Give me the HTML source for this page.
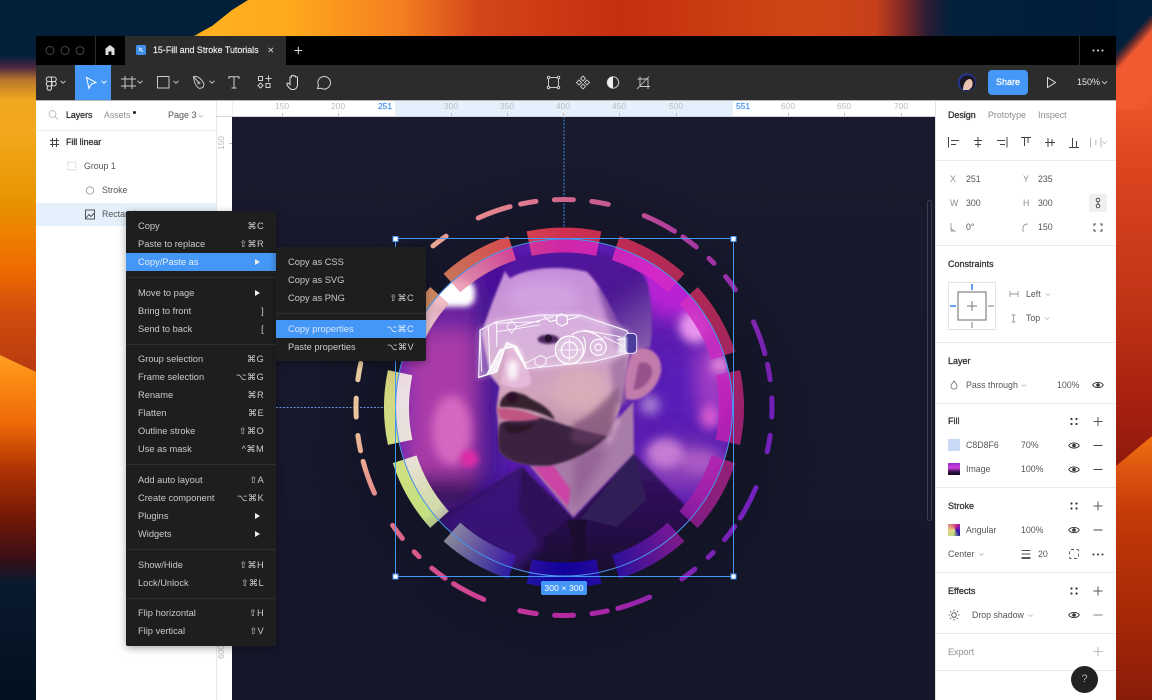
<!DOCTYPE html>
<html><head><meta charset="utf-8"><style>
html,body{margin:0;padding:0;width:1152px;height:700px;overflow:hidden;background:#03203b}
body{position:relative;font-family:"Liberation Sans","DejaVu Sans",sans-serif;font-size:9.2px;color:#333}
.a{position:absolute}
.t{position:absolute;white-space:nowrap;line-height:12px}
.b{-webkit-text-stroke:.3px #333;color:#333}
.g{color:#8d8d8d}
.k{color:#555}
.rl{position:absolute;top:101px;width:30px;text-align:center;font-size:8.4px;line-height:11px;color:#bcbcbc}
.rb{color:#4b94ea;-webkit-text-stroke:.25px #4b94ea}
.tk{position:absolute;top:113px;width:1px;height:3px;background:#bcbcbc}
.hr{position:absolute;left:936px;width:180px;height:1px;background:#ececec}
.m{position:absolute;background:#1e1e1e;color:#c9c9c9;box-shadow:0 2px 8px rgba(0,0,0,.35)}
.m .t{color:#c9c9c9;font-size:9.3px}
.m .s{position:absolute;white-space:nowrap;line-height:12px;font-size:9.3px;color:#c9c9c9;text-align:right;font-family:"DejaVu Sans","Liberation Sans",sans-serif;letter-spacing:.3px}
.m .s b{font-family:"Liberation Sans",sans-serif;font-weight:normal}
.m .l{position:absolute;left:0;right:0;height:1px;background:#2f2f2f}
.m .h{position:absolute;left:0;right:0;height:18px;background:#4597f7}
.m .ar{position:absolute;width:0;height:0;border-left:5px solid #eee;border-top:3px solid transparent;border-bottom:3px solid transparent}
</style></head><body>

<!-- wallpaper -->
<div class="a" style="left:0;top:0;width:1152px;height:36px;background:linear-gradient(90deg,#03203b 0,#03203b 180px,#ffb01f 200px,#ffa91d 290px,#f47f20 400px,#d4451a 480px,#c5300f 620px,#cf4615 800px,#c8401a 875px,#7a2626 905px,#2a1c34 928px,#04203c 950px,#021c38 1152px);"></div>
<div class="a" style="left:0;top:0;width:260px;height:37px;background:#03203b;clip-path:polygon(0 0,248px 0,232px 10px,212px 26px,192px 37px,0 37px)"></div>
<div class="a" style="left:0;top:0;width:36px;height:700px;background:linear-gradient(180deg,#03203b 0,#03203b 56px,#4a2540 67px,#b8762c 80px,#f0a820 100px,#f2a81e 130px,#e89400 200px,#f06c00 268px,#d24c0c 312px,#b83a12 372px)"></div>
<div class="a" style="left:0;top:350px;width:36px;height:350px;clip-path:polygon(0 5px,36px 22px,36px 350px,0 350px);background:linear-gradient(180deg,#ffa024 5px,#fb8a12 30px,#ee6808 74px,#b03404 119px,#7a1a06 163px,#3a0e14 208px,#0a1a2e 232px,#02101f 350px)"></div>
<div class="a" style="left:1116px;top:110px;width:36px;height:590px;background:linear-gradient(180deg,#ea5329 0,#d8431e 70px,#bf3315 200px,#a82010 290px,#8f1a0e 354px)"></div>
<div class="a" style="left:1116px;top:0;width:36px;height:110px;background:linear-gradient(132deg,#02203c 0,#02203c 35%,#6a2d2c 41%,#f15a30 48%,#f15a30 85%,#ea5329 100%)"></div>
<div class="a" style="left:1116px;top:430px;width:36px;height:270px;clip-path:polygon(0 36px,36px 6px,36px 270px,0 270px);background:linear-gradient(180deg,#f07010 6px,#dc5410 40px,#c53a08 83px,#aa2a06 173px,#8a1c0a 270px)"></div>

<!-- window base -->
<div class="a" style="left:36px;top:36px;width:1080px;height:29px;background:#000"></div>
<div class="a" style="left:125px;top:36px;width:161px;height:29px;background:#2c2c2c"></div>
<div class="a" style="left:95px;top:36px;width:1px;height:29px;background:#2c2c2c"></div>
<div class="a" style="left:1079px;top:36px;width:1px;height:29px;background:#2c2c2c"></div>
<div class="a" style="left:36px;top:65px;width:1080px;height:35px;background:#2c2c2c"></div>
<div class="a" style="left:36px;top:100px;width:1080px;height:1px;background:#b9b9b9"></div>
<div class="a" style="left:75px;top:65px;width:36px;height:35px;background:#4597f7"></div>
<div class="a" style="left:36px;top:101px;width:180px;height:599px;background:#fff"></div>
<div class="a" style="left:216px;top:101px;width:720px;height:599px;background:#fff"></div>
<div class="a" style="left:936px;top:101px;width:180px;height:599px;background:#fff"></div>

<!-- canvas -->
<svg class="a" style="left:0;top:0" width="1152" height="700" viewBox="0 0 1152 700" xmlns="http://www.w3.org/2000/svg">
<defs>
<linearGradient id="cv" x1="0" y1="0" x2="0" y2="1"><stop offset="0" stop-color="#191a2d"/><stop offset="1" stop-color="#15162a"/></linearGradient>
<radialGradient id="shg" cx="50%" cy="50%" r="50%"><stop offset="0" stop-color="#0f1021" stop-opacity=".6"/><stop offset=".72" stop-color="#0f1021" stop-opacity=".45"/><stop offset="1" stop-color="#0f1021" stop-opacity="0"/></radialGradient>
<filter id="b30" x="-50%" y="-50%" width="200%" height="200%"><feGaussianBlur stdDeviation="30"/></filter>
<filter id="b20" x="-50%" y="-50%" width="200%" height="200%"><feGaussianBlur stdDeviation="18"/></filter>
<filter id="b14" x="-60%" y="-60%" width="220%" height="220%"><feGaussianBlur stdDeviation="14"/></filter>
<filter id="b8" x="-30%" y="-30%" width="160%" height="160%"><feGaussianBlur stdDeviation="8"/></filter>
<filter id="b3" x="-20%" y="-20%" width="140%" height="140%"><feGaussianBlur stdDeviation="3"/></filter>
<clipPath id="ph"><circle cx="672" cy="652.5" r="505"/></clipPath>
<clipPath id="ph2"><circle cx="564" cy="407.5" r="168"/></clipPath>
<linearGradient id="fc" x1="0" y1="0" x2="0" y2="1"><stop offset="0" stop-color="#c48cdc"/><stop offset=".3" stop-color="#cc98d4"/><stop offset=".65" stop-color="#d2a4bc"/><stop offset="1" stop-color="#b07c98"/></linearGradient>
<linearGradient id="st" x1="0" y1="0" x2="0" y2="1"><stop offset="0" stop-color="#3a1468"/><stop offset=".45" stop-color="#2a0f50"/><stop offset="1" stop-color="#140824"/></linearGradient>
<linearGradient id="hr" x1="0" y1="0" x2="1" y2="1"><stop offset="0" stop-color="#5210a4"/><stop offset=".6" stop-color="#4e1a94"/><stop offset="1" stop-color="#8a62b0"/></linearGradient>
<mask id="mo" maskUnits="userSpaceOnUse" x="0" y="0" width="1152" height="700"><circle cx="564" cy="407.5" r="208" fill="none" stroke="#fff" stroke-width="5" stroke-linecap="round" pathLength="360" transform="rotate(-92.6 564 407.5)" stroke-dasharray="5.2 5.1 4.6 10.4 9.4 2.8 4.6 4.7 1.9 4.9 4.5 10.2 9.3 3 4.3 5.1 5.2 5.1 4.6 10.4 9.4 2.8 4.6 4.7 1.9 4.9 4.5 10.2 9.3 3 4.3 5.1 5.2 5.1 4.6 10.4 9.4 2.8 4.6 4.7 1.9 4.9 4.5 10.2 9.3 3 4.3 5.1 5.2 5.1 4.6 10.4 9.4 2.8 4.6 4.7 1.9 4.9 4.5 10.2 9.3 3 4.3 5.1"/></mask>
<mask id="mr" maskUnits="userSpaceOnUse" x="0" y="0" width="1152" height="700"><circle cx="564" cy="407.5" r="167.5" fill="none" stroke="#fff" stroke-width="25" pathLength="360" transform="rotate(-102 564 407.5)" stroke-dasharray="24 6"/></mask>
</defs>
<rect x="232" y="116" width="704" height="584" fill="url(#cv)"/>
<circle cx="564" cy="425" r="265" fill="url(#shg)"/>
<line x1="564" y1="116" x2="564" y2="239" stroke="#3f8fe8" stroke-width="1" stroke-dasharray="2 1.5"/>
<line x1="276" y1="407.5" x2="395" y2="407.5" stroke="#5f95d8" stroke-width="1" stroke-dasharray="2 1.5"/>
<rect x="927.5" y="200.5" width="4" height="320" rx="2" fill="none" stroke="#3b3c4c"/>

<!-- outer dashes -->
<foreignObject x="340" y="180" width="450" height="450" mask="url(#mo)"><div xmlns="http://www.w3.org/1999/xhtml" style="width:450px;height:450px;background:conic-gradient(from 0deg at 224px 227.5px,#cf648c 0deg,#c55c90 12deg,#b4409a 30deg,#9e30a8 48deg,#8a2aac 60deg,#7a22b0 72deg,#7420b6 90deg,#7022be 112deg,#7a22b6 135deg,#8a22b0 150deg,#a526a8 168deg,#b82aa0 182deg,#c63a98 195deg,#d24a90 212deg,#d85a88 228deg,#e47c8c 240deg,#eaa090 252deg,#e8c49c 268deg,#e6cca2 285deg,#eab09a 318deg,#e88c90 332deg,#e07c8e 348deg,#cf648c 360deg)"></div></foreignObject>

<!-- thick ring under -->
<foreignObject x="340" y="180" width="450" height="450" mask="url(#mr)"><div xmlns="http://www.w3.org/1999/xhtml" style="width:450px;height:450px;background:conic-gradient(from 0deg at 224px 227.5px,#cf3050 0deg,#b62a55 30deg,#a82858 60deg,#9c1f6c 90deg,#8c1f7c 120deg,#7a1a8c 140deg,#300f9c 162deg,#0f06a5 180deg,#2a1aa0 198deg,#8a8898 222deg,#c4e080 232deg,#d0e080 250deg,#d2d880 275deg,#d0a068 300deg,#c97058 320deg,#d84a50 342deg,#cf3050 360deg)"></div></foreignObject>

<!-- photo -->
<g clip-path="url(#ph2)"><g transform="translate(340 190) scale(.33333)" clip-path="url(#ph)">
<rect x="150" y="130" width="1050" height="1050" fill="#5a1cb0"/>
<g filter="url(#b30)">
<rect x="150" y="130" width="330" height="300" fill="#6a20a0"/>
<rect x="190" y="420" width="220" height="440" fill="#a83aa8"/>
<rect x="410" y="240" width="70" height="700" fill="#3c1490"/>
<circle cx="470" cy="250" r="70" fill="#4a0f98"/>
<ellipse cx="1010" cy="280" rx="130" ry="110" fill="#b820d4"/>
<ellipse cx="1120" cy="560" rx="50" ry="120" fill="#a840c8"/>
<ellipse cx="1010" cy="600" rx="70" ry="110" fill="#581cb8"/>
<ellipse cx="1040" cy="830" rx="130" ry="70" fill="#8a40b8"/>
<rect x="190" y="860" width="230" height="110" fill="#3a1660"/>
</g>
<g filter="url(#b14)">
<ellipse cx="335" cy="720" rx="60" ry="105" fill="#d468c0"/>
<ellipse cx="1065" cy="410" rx="48" ry="50" fill="#e894ec"/>
<ellipse cx="1140" cy="525" rx="28" ry="26" fill="#e088d8"/>
<ellipse cx="1110" cy="680" rx="30" ry="38" fill="#d058d0"/>
<circle cx="930" cy="645" r="30" fill="#a078d0"/>
<ellipse cx="975" cy="790" rx="55" ry="45" fill="#c47cd4"/>
<ellipse cx="1075" cy="815" rx="55" ry="35" fill="#a858c4"/>
</g>
<g filter="url(#b8)">
<rect x="275" y="272" width="130" height="78" rx="30" fill="#fff"/>
<circle cx="388" cy="806" r="26" fill="#dc2ca4"/>
</g>
<!-- suit -->
<path d="M240 1010 L400 920 L545 830 L700 985 L880 790 L1040 950 L1200 1200 L150 1200Z" fill="url(#st)" filter="url(#b3)"/>
<path d="M300 985 L545 830 L540 960 L610 1060 L520 1160 L350 1100Z" fill="#3e1484" opacity=".75" filter="url(#b14)"/>
<path d="M545 832 L690 985 L600 1050 L542 950Z" fill="#2e1058"/>
<path d="M882 790 L722 985 L830 1010 L920 930Z" fill="#321e56"/>
<path d="M682 990 L740 990 L735 1060 L760 1180 L670 1180 L700 1060Z" fill="#1c0c30"/>
<!-- neck -->
<path d="M568 825 L700 982 L882 790 L880 635 L780 745 L640 820Z" fill="#a87ca8" filter="url(#b3)"/>
<path d="M578 830 L640 826 L692 900 L684 950Z" fill="#cc44a4" filter="url(#b3)"/>
<path d="M815 650 L838 690 L810 760 L795 750Z" fill="#f0c4e0" opacity=".7" filter="url(#b8)"/>
<path d="M700 800 L780 760 L800 790 L700 960Z" fill="#8e5a90" opacity=".7" filter="url(#b14)"/>
<!-- face -->
<path d="M500 232 C470 300 440 380 425 430 L450 555 L478 590 L470 650 L480 782 C500 815 560 828 640 822 C725 800 800 762 842 650 L870 480 L905 300 L830 215 L600 205Z" fill="url(#fc)" filter="url(#b3)"/>
<ellipse cx="720" cy="600" rx="80" ry="70" fill="#dcb0b8" opacity=".75" filter="url(#b20)"/>
<ellipse cx="610" cy="320" rx="110" ry="50" fill="#d4a4e4" opacity=".8" filter="url(#b20)"/>
<path d="M770 290 L880 290 L880 480 L830 470Z" fill="#7e4aa4" filter="url(#b8)" opacity=".85"/>
<path d="M810 520 L865 480 L860 640 L825 650Z" fill="#9a6c9c" opacity=".7" filter="url(#b8)"/>
<!-- hair -->
<path d="M490 238 C500 195 600 175 720 180 C830 185 908 220 925 290 C940 380 936 440 930 472 L880 480 C870 440 845 410 830 390 C800 320 770 275 740 245 C660 225 560 232 510 265Z" fill="url(#hr)" filter="url(#b3)"/>
<!-- ear -->
<path d="M880 480 C930 458 972 500 962 550 C950 600 900 642 858 626 C848 580 860 520 880 480Z" fill="#c27cac" filter="url(#b3)"/>
<path d="M896 520 C925 510 940 530 935 555 C920 590 895 600 880 600Z" fill="#84407f" opacity=".7" filter="url(#b3)"/>
<!-- beard -->
<path d="M480 700 C500 690 560 680 600 682 C640 690 680 712 800 738 C770 775 700 815 625 827 C560 830 495 815 478 782 C472 750 474 720 480 700Z" fill="#3a2040" filter="url(#b3)"/>
<path d="M700 700 C760 680 800 620 838 590 L815 735 C770 770 720 770 690 750Z" fill="#6c4068" opacity=".6" filter="url(#b8)"/>
<path d="M480 640 C490 600 540 600 570 625 C600 640 632 655 645 690 C600 665 540 648 480 652Z" fill="#36202e" filter="url(#b3)"/>
<path d="M470 656 C520 652 570 665 602 686 C560 696 510 696 480 686Z" fill="#c05484" filter="url(#b3)"/>
<path d="M498 702 C530 708 560 708 582 700 C565 732 515 735 498 722Z" fill="#2a1428" filter="url(#b3)"/>
<!-- nose -->
<path d="M505 470 L545 480 L575 575 C565 600 520 600 480 580Z" fill="#e4b8d8" filter="url(#b3)"/>
<ellipse cx="518" cy="540" rx="16" ry="32" fill="#fff" opacity=".85" filter="url(#b8)"/>
<ellipse cx="517" cy="622" rx="17" ry="16" fill="#2e0e28" filter="url(#b3)"/>
<!-- eye & glasses -->
<path d="M416 562 L420 420 L470 395 L600 375 L720 375 L860 422 L888 470 L860 490 L760 515 L560 536 L530 470 L500 458 L470 545Z" fill="#f4ecff" fill-opacity=".28"/>
<path d="M416 562 L420 420 L470 395 L600 375 L720 375 L860 422 L888 470 L860 490 L760 515 L560 536 L530 470 L500 458 L470 545Z" fill="none" stroke="#fff" stroke-width="10" opacity=".35" filter="url(#b8)"/>
<ellipse cx="625" cy="448" rx="32" ry="14" fill="#4a2560" filter="url(#b3)"/>
<circle cx="625" cy="445" r="11" fill="#26102e"/>
<path d="M416 562 L420 420 L470 395 L600 375 L720 375 L860 422 L888 470 L860 490 L760 515 L560 536 L530 470 L500 458 L470 545Z" fill="none" stroke="#f8f2ff" stroke-width="3.5"/>
<path d="M416 562 L470 545 L500 458 L530 470 L560 536 L520 470 L480 480 L440 555Z" fill="#fff" fill-opacity=".75" stroke="#fff" stroke-width="4"/>
<path d="M420 420 L425 545 M445 410 L450 540 M470 395 L470 470" stroke="#fff" stroke-width="3.5" opacity=".85"/>
<path d="M500 410 L515 392 L530 410 L515 430Z M460 400 L600 395 M470 425 L600 405 M530 410 L640 380" fill="none" stroke="#fff" stroke-width="2.5"/>
<path d="M650 380 L665 372 L682 380 L682 400 L665 408 L650 400Z M612 378 L630 395 L650 390 M682 390 L720 378" fill="none" stroke="#fff" stroke-width="3.5"/>
<path d="M585 505 L602 496 L618 505 L618 522 L602 530 L585 522Z M555 520 L585 505 M618 505 L650 495" fill="none" stroke="#fff" stroke-width="2.5"/>
<circle cx="688" cy="480" r="42" fill="#fff" fill-opacity=".22" stroke="#fff" stroke-width="4"/>
<circle cx="688" cy="480" r="24" fill="none" stroke="#fff" stroke-width="3.5"/>
<path d="M688 445 V515 M653 480 H723" stroke="#fff" stroke-width="2.5"/>
<path d="M695 435 C730 410 770 430 790 450 M730 440 C745 470 730 500 720 505" fill="none" stroke="#fff" stroke-width="3.5"/>
<circle cx="775" cy="472" r="24" fill="#fff" fill-opacity=".15" stroke="#fff" stroke-width="3.5"/>
<circle cx="775" cy="472" r="10" fill="none" stroke="#fff" stroke-width="3.5"/>
<path d="M730 420 L840 440 M790 440 L855 470 M830 450 L880 440" stroke="#fff" stroke-width="3" opacity=".9"/>
<rect x="855" y="430" width="35" height="60" rx="12" fill="#4a3c9c" stroke="#e8e0ff" stroke-width="3"/>
<rect x="835" y="440" width="26" height="50" fill="#fff" opacity=".7" filter="url(#b3)"/>
</g></g>

<!-- ring over image -->
<g clip-path="url(#ph2)"><foreignObject x="340" y="180" width="450" height="450" mask="url(#mr)" opacity=".9"><div xmlns="http://www.w3.org/1999/xhtml" style="width:450px;height:450px;background:conic-gradient(from 0deg at 224px 227.5px,#dc28a8 0deg,#d828c8 30deg,#cc30c4 60deg,#c022b8 90deg,#a822a8 120deg,#7a1aa0 140deg,#3010a4 162deg,#1000a8 180deg,#3a18a8 198deg,#9090a8 222deg,#e4f0b0 232deg,#f0f4d8 250deg,#f8f4ec 275deg,#f4d8d0 300deg,#e888a8 325deg,#e04090 345deg,#dc28a8 360deg)"></div></foreignObject></g>

<!-- selection -->
<circle cx="564" cy="407.5" r="168.5" fill="none" stroke="#4a97ee" stroke-width="1"/>
<rect x="395.5" y="238.5" width="338" height="338" fill="none" stroke="#4597f7" stroke-width="1"/>
<g fill="#fff" stroke="#4597f7"><rect x="393" y="236.5" width="5" height="5"/><rect x="731" y="236.5" width="5" height="5"/><rect x="393" y="574" width="5" height="5"/><rect x="731" y="574" width="5" height="5"/></g>
<rect x="541" y="581" width="46" height="14" rx="2" fill="#4597f7"/>
</svg>
<div class="t" style="left:541px;top:582px;width:46px;text-align:center;color:#fff;font-size:8.6px;letter-spacing:.1px">300 × 300</div>

<!-- left panel + rulers decoration -->
<div class="a" style="left:36px;top:130px;width:180px;height:1px;background:#eee"></div>
<div class="a" style="left:36px;top:203px;width:180px;height:23px;background:#e4f1fc"></div>
<div class="a" style="left:216px;top:101px;width:1px;height:599px;background:#e8e8e8"></div>
<div class="a" style="left:232px;top:101px;width:1px;height:15px;background:#eee"></div>
<div class="a" style="left:395px;top:101px;width:338px;height:15px;background:#e4f1fc"></div>
<div class="a" style="left:216px;top:116px;width:720px;height:1px;background:#d5d6dc"></div>
<div class="rl" style="left:267px">150</div><div class="rl" style="left:323px">200</div><div class="rl rb" style="left:370px">251</div>
<div class="rl" style="left:436px">300</div><div class="rl" style="left:492px">350</div><div class="rl" style="left:548px">400</div><div class="rl" style="left:604px">450</div><div class="rl" style="left:661px">500</div>
<div class="rl rb" style="left:728px">551</div><div class="rl" style="left:773px">600</div><div class="rl" style="left:829px">650</div><div class="rl" style="left:886px">700</div>
<div class="tk" style="left:282px"></div><div class="tk" style="left:338px"></div><div class="tk" style="left:451px"></div><div class="tk" style="left:507px"></div><div class="tk" style="left:563px"></div><div class="tk" style="left:619px"></div><div class="tk" style="left:676px"></div><div class="tk" style="left:788px"></div><div class="tk" style="left:844px"></div><div class="tk" style="left:901px"></div>
<div class="a" style="left:229px;top:143px;width:3px;height:1px;background:#bcbcbc"></div>
<div class="t" style="left:212px;top:137px;width:20px;text-align:center;font-size:8.2px;color:#bcbcbc;transform:rotate(-90deg)">150</div>
<div class="t" style="left:212px;top:646px;width:20px;text-align:center;font-size:8.2px;color:#bcbcbc;transform:rotate(-90deg)">600</div>

<div class="t b" style="left:66px;top:109px;font-size:8.8px">Layers</div>
<div class="t g" style="left:104px;top:109px;font-size:8.8px">Assets</div>
<div class="a" style="left:132.5px;top:110.5px;width:3px;height:3px;border-radius:50%;background:#222"></div>
<div class="t k" style="left:168px;top:109px;font-size:9px">Page 3</div>
<div class="t b" style="left:66px;top:136px;font-size:8.8px">Fill linear</div>
<div class="t k" style="left:84px;top:160px;font-size:8.8px">Group 1</div>
<div class="t k" style="left:102px;top:184px;font-size:8.8px">Stroke</div>
<div class="t k" style="left:102px;top:208px;font-size:8.8px">Rectangle</div>

<!-- title text -->
<div class="t" style="left:153px;top:44px;color:#f0f0f0;font-size:8.9px;-webkit-text-stroke:.15px #f0f0f0">15-Fill and Stroke Tutorials</div>
<div class="a" style="left:988px;top:70px;width:40px;height:25px;border-radius:4px;background:#4597f7"></div>
<div class="t" style="left:988px;top:76px;width:40px;text-align:center;color:#fff;font-size:9px;-webkit-text-stroke:.25px #fff">Share</div>
<div class="t" style="left:1077px;top:76px;color:#e8e8e8;font-size:9px">150%</div>

<!-- right panel -->
<div class="a" style="left:935px;top:101px;width:1px;height:599px;background:#e2e2e2"></div>
<div class="hr" style="top:160px"></div><div class="hr" style="top:245px"></div><div class="hr" style="top:342px"></div><div class="hr" style="top:403px"></div><div class="hr" style="top:487px"></div><div class="hr" style="top:572px"></div><div class="hr" style="top:633px"></div><div class="hr" style="top:670px"></div>
<div class="t b" style="left:948px;top:109px;font-size:8.9px">Design</div>
<div class="t g" style="left:988px;top:109px;font-size:8.9px">Prototype</div>
<div class="t g" style="left:1038px;top:109px;font-size:8.9px">Inspect</div>
<div class="t g" style="left:950px;top:173px;font-size:8.8px">X</div><div class="t k" style="left:966px;top:173px;font-size:8.8px">251</div>
<div class="t g" style="left:1023px;top:173px;font-size:8.8px">Y</div><div class="t k" style="left:1038px;top:173px;font-size:8.8px">235</div>
<div class="t g" style="left:950px;top:197px;font-size:8.8px">W</div><div class="t k" style="left:966px;top:197px;font-size:8.8px">300</div>
<div class="t g" style="left:1023px;top:197px;font-size:8.8px">H</div><div class="t k" style="left:1038px;top:197px;font-size:8.8px">300</div>
<div class="t k" style="left:966px;top:221px;font-size:8.8px">0°</div><div class="t k" style="left:1038px;top:221px;font-size:8.8px">150</div>
<div class="t b" style="left:948px;top:258px;font-size:9px">Constraints</div>
<div class="t k" style="left:1026px;top:288px;font-size:8.8px">Left</div>
<div class="t k" style="left:1026px;top:312px;font-size:8.8px">Top</div>
<div class="t b" style="left:948px;top:355px;font-size:9px">Layer</div>
<div class="t k" style="left:966px;top:379px;font-size:8.8px">Pass through</div>
<div class="t k" style="left:1057px;top:379px;font-size:8.8px">100%</div>
<div class="t b" style="left:948px;top:415px;font-size:9px">Fill</div>
<div class="t k" style="left:966px;top:439px;font-size:8.8px">C8D8F6</div><div class="t k" style="left:1021px;top:439px;font-size:8.8px">70%</div>
<div class="t k" style="left:966px;top:463px;font-size:8.8px">Image</div><div class="t k" style="left:1021px;top:463px;font-size:8.8px">100%</div>
<div class="t b" style="left:948px;top:500px;font-size:9px">Stroke</div>
<div class="t k" style="left:966px;top:524px;font-size:8.8px">Angular</div><div class="t k" style="left:1021px;top:524px;font-size:8.8px">100%</div>
<div class="t k" style="left:948px;top:548px;font-size:8.8px">Center</div><div class="t k" style="left:1038px;top:548px;font-size:8.8px">20</div>
<div class="t b" style="left:948px;top:585px;font-size:9px">Effects</div>
<div class="t k" style="left:972px;top:609px;font-size:8.8px">Drop shadow</div>
<div class="t" style="left:948px;top:646px;font-size:9px;color:#a5a5a5;-webkit-text-stroke:.2px #a5a5a5">Export</div>
<div class="a" style="left:948px;top:439px;width:12px;height:12px;background:#c8d8f6"></div>
<div class="a" style="left:948px;top:463px;width:12px;height:12px;background:linear-gradient(180deg,#9a2ad0,#d040e0 40%,#2a1040 75%,#140820)"></div>
<div class="a" style="left:948px;top:524px;width:12px;height:12px;background:conic-gradient(from 200deg at 60% 45%,#c0e080,#e8d080,#e07a80,#c02090,#6a1ab8,#2a1aa0,#c0e080)"></div>
<div class="a" style="left:1089px;top:194px;width:18px;height:18px;background:#f0f0f0;border-radius:2px"></div>
<div class="a" style="left:1071px;top:666px;width:27px;height:27px;border-radius:50%;background:#222"></div>
<div class="t" style="left:1071px;top:673px;width:27px;text-align:center;color:#a8a8a8;font-size:11px">?</div>

<!-- UI icons -->
<svg class="a" style="left:0;top:0" width="1152" height="700" viewBox="0 0 1152 700" xmlns="http://www.w3.org/2000/svg" fill="none">
<defs>
<g id="eye"><path d="M-5.3 0C-3.3-3.4 3.3-3.4 5.3 0C3.3 3.4-3.3 3.4-5.3 0Z" stroke="#333" stroke-width=".9"/><circle r="1.8" fill="#333"/></g>
<g id="dots" fill="#333"><circle cx="-2.5" cy="-2.5" r="1.1"/><circle cx="2.5" cy="-2.5" r="1.1"/><circle cx="-2.5" cy="2.5" r="1.1"/><circle cx="2.5" cy="2.5" r="1.1"/></g>
<path id="plus" d="M-4.5 0H4.5M0-4.5V4.5" stroke="#555" stroke-width="1"/>
<path id="minus" d="M-4.5 0H4.5" stroke="#444" stroke-width="1"/>
<path id="chv" d="M-2.5-1.2L0 1.2L2.5-1.2" stroke="#c8c8c8" stroke-width="1"/>
<path id="chl" d="M-2.2-1L0 1L2.2-1" stroke="#b5b5b5" stroke-width=".8"/>
</defs>
<!-- title bar -->
<g stroke="#4a4a4a" stroke-width="1"><circle cx="50" cy="50.5" r="4"/><circle cx="65" cy="50.5" r="4"/><circle cx="80" cy="50.5" r="4"/></g>
<path d="M105.5 55V48.5L110 45L114.5 48.5V55H111.5V51.5H108.5V55Z" fill="#ddd"/>
<rect x="136" y="45" width="10" height="10" rx="1.5" fill="#3f8fe8"/><path d="M138.5 47.5L143 52M139 51L142 48" stroke="#cfe2fb" stroke-width="1.2"/>
<path d="M268.5 47.8L273 52.2M273 47.8L268.5 52.2" stroke="#c8c8c8" stroke-width="1"/>
<path d="M294.5 50.5H302M298.3 46.8V54.2" stroke="#e0e0e0" stroke-width="1"/>
<g fill="#ddd"><circle cx="1093.5" cy="50.5" r="1"/><circle cx="1098" cy="50.5" r="1"/><circle cx="1102.5" cy="50.5" r="1"/></g>
<!-- toolbar -->
<g stroke="#dcdcdc" stroke-width="1"><path d="M48.5 77H51.5V81.5H48.5A2.2 2.2 0 0 1 48.5 77ZM51.5 77H54A2.2 2.2 0 0 1 54 81.5H51.5ZM48.5 81.5H51.5V86H48.5A2.2 2.2 0 0 1 48.5 81.5ZM48.5 86H51.5V88A2.2 2.2 0 1 1 48.5 86Z"/><circle cx="54" cy="83.7" r="2.2"/></g>
<use href="#chv" x="63" y="82"/>
<path d="M86.5 77.5L96 82.5L91.5 84L89 88.5Z" stroke="#fff" stroke-width="1"/>
<use href="#chv" x="104" y="82" style="filter:brightness(1.3)"/>
<path d="M125 76V89M132 76V89M121 79H136M121 86H136" stroke="#c8c8c8" stroke-width="1"/>
<use href="#chv" x="140" y="82"/>
<rect x="157.5" y="76.5" width="11.5" height="11.5" stroke="#c8c8c8" stroke-width="1"/>
<use href="#chv" x="176" y="82"/>
<path d="M193.5 76.5C197 76 201 78 204 84L203 87.5L199.5 88.5C196 86.5 194 82 193.5 76.5ZM193.5 76.5L199 83" stroke="#c8c8c8" stroke-width="1"/><circle cx="199" cy="83" r="1" stroke="#c8c8c8" stroke-width=".8"/>
<use href="#chv" x="212" y="82"/>
<path d="M229 79V76.7H239V79M234 76.7V88M231.5 88H236.5" stroke="#d0d0d0" stroke-width="1"/>
<g stroke="#d0d0d0" stroke-width="1"><rect x="258.5" y="76.5" width="4" height="4"/><path d="M268.5 75.5V81.5M265.5 78.5H271.5"/><path d="M260.5 83L263 85.5L260.5 88L258 85.5Z"/><rect x="266" y="83.5" width="4" height="4"/></g>
<path d="M290 88.5C288 87 286.5 84.5 287 83.5C287.5 82.5 289 83 290 84.5V77.5C290 76.5 291.5 76.5 291.5 77.5V76C291.5 75 293.5 75 293.5 76V76.5C293.5 75.5 295.5 75.5 295.5 76.5V77.5C295.5 76.5 297.5 76.5 297.5 77.5V84C297.5 87 296 89 294 89.5H292C291 89.5 290.5 89 290 88.5Z" stroke="#e0e0e0" stroke-width="1"/>
<path d="M317.5 88.5L318.5 85.5A6.3 6.3 0 1 1 321 88.2Z" stroke="#d0d0d0" stroke-width="1"/>
<g stroke="#c8c8c8" stroke-width="1"><rect x="548.5" y="77.5" width="10" height="10"/><circle cx="548.5" cy="77.5" r="1.2" fill="#2c2c2c"/><circle cx="558.5" cy="77.5" r="1.2" fill="#2c2c2c"/><circle cx="548.5" cy="87.5" r="1.2" fill="#2c2c2c"/><circle cx="558.5" cy="87.5" r="1.2" fill="#2c2c2c"/><path d="M583 76L585.5 78.5L583 81L580.5 78.5ZM583 84L585.5 86.5L583 89L580.5 86.5ZM579 80L581.5 82.5L579 85L576.5 82.5ZM587 80L589.5 82.5L587 85L584.5 82.5Z" stroke-width=".9"/><circle cx="613" cy="82.5" r="5.7"/></g>
<path d="M613 76.8A5.7 5.7 0 0 0 613 88.2Z" fill="#eee"/>
<path d="M637.5 79H648V89M640 76.5V86.5H650M637 89L649 76.5" stroke="#c8c8c8" stroke-width=".9"/>
<circle cx="967" cy="82.5" r="9" fill="#2438a0"/><circle cx="967.5" cy="83" r="7.8" fill="#1a1520"/><path d="M963 90C963 84 966 79 970 79C973 80 973 84 972 87L969 90Z" fill="#e8c4b0"/>
<path d="M1047.5 77.5L1055.5 82.5L1047.5 87.5Z" stroke="#ddd" stroke-width="1"/>
<use href="#chv" x="1104.5" y="82.5"/>
<!-- layers -->
<circle cx="52.5" cy="114" r="3.4" stroke="#bbb" stroke-width=".9"/><path d="M55 116.5L58 119.5" stroke="#bbb" stroke-width=".9"/>
<use href="#chl" x="201" y="116"/>
<path d="M52.5 138V147M56.5 138V147M50 140.5H59M50 144.5H59" stroke="#444" stroke-width="1"/>
<rect x="68" y="162" width="8" height="8" stroke="#c0c0c0" stroke-width=".9" stroke-dasharray="1.5 1.5"/>
<circle cx="90" cy="190.5" r="3.7" stroke="#999" stroke-width=".9"/>
<rect x="85.5" y="210" width="9" height="9" stroke="#444" stroke-width=".9"/><path d="M86 218L89 214.5L91 216.5L94.5 213" stroke="#444" stroke-width=".9"/>
<!-- align -->
<g stroke="#444" stroke-width="1"><path d="M948.5 137V147.5M951 140.5H959M951 144.5H956"/><path d="M978 137V147.5M974 140.5H982M975 144.5H981"/><path d="M1007 137V147.5M997 140.5H1005M1000 144.5H1005"/><path d="M1021 137.5H1031M1024.5 138V146M1028 138V143"/><path d="M1045 142.5H1055M1048 138V147M1052 139V146"/><path d="M1069 147.5H1079M1072.5 138V147M1076.5 141V147"/></g>
<path d="M1090.5 137.5V147.5M1101 137.5V147.5M1095.8 140V145" stroke="#bbb" stroke-width="1"/><use href="#chl" x="1104.5" y="142.5"/>
<!-- xywh -->
<path d="M951 223V231H956M951 228.5L954 231" stroke="#999" stroke-width=".9"/>
<path d="M1023 232V228.5C1023 225.5 1025 224 1028 224" stroke="#999" stroke-width=".9"/>
<circle cx="1098" cy="200" r="1.8" stroke="#444" stroke-width=".9"/><circle cx="1098" cy="206" r="1.8" stroke="#444" stroke-width=".9"/><path d="M1098 201.5V204.5" stroke="#444"/>
<path d="M1094 226V224H1096M1100 224H1102V226M1102 229V231H1100M1096 231H1094V229" stroke="#444" stroke-width="1"/>
<!-- constraints -->
<rect x="948.5" y="282.5" width="47" height="47" stroke="#e3e3e3"/>
<rect x="958" y="292" width="28" height="28" stroke="#6a6a6a" stroke-width="1"/>
<path d="M967 306H977M972 301V311" stroke="#777" stroke-width="1"/>
<path d="M972 284V290M950 306H956" stroke="#2f80ed" stroke-width="1.5"/>
<path d="M988 306H994M972 322V328" stroke="#aaa" stroke-width="1.5"/>
<path d="M1010 291V297M1018 291V297M1010 294H1018" stroke="#999" stroke-width=".9"/><use href="#chl" x="1048" y="294.5"/>
<path d="M1011.5 315H1015.5M1011.5 322H1015.5M1013.5 315V322" stroke="#999" stroke-width=".9"/><use href="#chl" x="1047" y="318.5"/>
<!-- layer -->
<path d="M954 381L956.5 384.5A3 3 0 1 1 951.5 384.5Z" stroke="#777" stroke-width=".9"/><use href="#chl" x="1024" y="385.5"/><use href="#eye" x="1098" y="385"/>
<!-- fill -->
<use href="#dots" x="1074" y="421.5"/><use href="#plus" x="1098" y="421.5"/>
<use href="#eye" x="1074" y="445.5"/><use href="#minus" x="1098" y="445.5"/>
<use href="#eye" x="1074" y="469.5"/><use href="#minus" x="1098" y="469.5"/>
<!-- stroke -->
<use href="#dots" x="1074" y="506"/><use href="#plus" x="1098" y="506"/>
<use href="#eye" x="1074" y="530"/><use href="#minus" x="1098" y="530"/>
<use href="#chl" x="981.5" y="554.5"/>
<path d="M1021.5 550.5H1030.5M1021.5 554H1030.5" stroke="#555" stroke-width="1"/><path d="M1021.5 558H1030.5" stroke="#555" stroke-width="2"/>
<rect x="1069.5" y="549.5" width="9" height="9" rx="1.5" stroke="#555" stroke-dasharray="3 2.5" stroke-width=".9"/>
<g fill="#333"><circle cx="1093.5" cy="554.5" r="1"/><circle cx="1098" cy="554.5" r="1"/><circle cx="1102.5" cy="554.5" r="1"/></g>
<!-- effects -->
<use href="#dots" x="1074" y="591"/><use href="#plus" x="1098" y="591"/>
<circle cx="954" cy="615" r="2.3" stroke="#444" stroke-width=".9"/><path d="M954 609.5V611M954 619V620.5M948.5 615H950M958 615H959.5M950.1 611.1L951.2 612.2M956.8 617.8L957.9 618.9M950.1 618.9L951.2 617.8M956.8 612.2L957.9 611.1" stroke="#444" stroke-width=".8"/>
<use href="#chl" x="1030.5" y="615.5"/><use href="#eye" x="1074" y="615"/><path d="M1093.5 615H1102.5" stroke="#999" stroke-width="1.2"/>
<path d="M1093.5 651.5H1102.5M1098 647V656" stroke="#bbb" stroke-width="1"/>
</svg>

<!-- context menu -->
<div class="m" style="left:126px;top:211px;width:150px;height:435px;border-radius:2px">
<div class="h" style="top:42px"></div>
<div class="l" style="top:66px"></div><div class="l" style="top:133px"></div><div class="l" style="top:253px"></div><div class="l" style="top:338px"></div><div class="l" style="top:387px"></div>
<div class="t" style="left:12px;top:9px">Copy</div><div class="s" style="right:12px;top:9px">⌘<b>C</b></div>
<div class="t" style="left:12px;top:27px">Paste to replace</div><div class="s" style="right:12px;top:27px">⇧⌘<b>R</b></div>
<div class="t" style="left:12px;top:45px;color:#e4eefc">Copy/Paste as</div><div class="ar" style="left:129px;top:48px"></div>
<div class="t" style="left:12px;top:76px">Move to page</div><div class="ar" style="left:129px;top:79px"></div>
<div class="t" style="left:12px;top:94px">Bring to front</div><div class="s" style="right:12px;top:94px"><b>]</b></div>
<div class="t" style="left:12px;top:112px">Send to back</div><div class="s" style="right:12px;top:112px"><b>[</b></div>
<div class="t" style="left:12px;top:142px">Group selection</div><div class="s" style="right:12px;top:142px">⌘<b>G</b></div>
<div class="t" style="left:12px;top:160px">Frame selection</div><div class="s" style="right:12px;top:160px">⌥⌘<b>G</b></div>
<div class="t" style="left:12px;top:178px">Rename</div><div class="s" style="right:12px;top:178px">⌘<b>R</b></div>
<div class="t" style="left:12px;top:196px">Flatten</div><div class="s" style="right:12px;top:196px">⌘<b>E</b></div>
<div class="t" style="left:12px;top:214px">Outline stroke</div><div class="s" style="right:12px;top:214px">⇧⌘<b>O</b></div>
<div class="t" style="left:12px;top:232px">Use as mask</div><div class="s" style="right:12px;top:232px"><b>^</b>⌘<b>M</b></div>
<div class="t" style="left:12px;top:263px">Add auto layout</div><div class="s" style="right:12px;top:263px">⇧<b>A</b></div>
<div class="t" style="left:12px;top:281px">Create component</div><div class="s" style="right:12px;top:281px">⌥⌘<b>K</b></div>
<div class="t" style="left:12px;top:299px">Plugins</div><div class="ar" style="left:129px;top:302px"></div>
<div class="t" style="left:12px;top:317px">Widgets</div><div class="ar" style="left:129px;top:320px"></div>
<div class="t" style="left:12px;top:348px">Show/Hide</div><div class="s" style="right:12px;top:348px">⇧⌘<b>H</b></div>
<div class="t" style="left:12px;top:366px">Lock/Unlock</div><div class="s" style="right:12px;top:366px">⇧⌘<b>L</b></div>
<div class="t" style="left:12px;top:396px">Flip horizontal</div><div class="s" style="right:12px;top:396px">⇧<b>H</b></div>
<div class="t" style="left:12px;top:414px">Flip vertical</div><div class="s" style="right:12px;top:414px">⇧<b>V</b></div>
</div>
<!-- submenu -->
<div class="m" style="left:276px;top:247px;width:150px;height:114px;border-radius:0 2px 2px 0">
<div class="h" style="top:73px"></div>
<div class="l" style="top:66px"></div>
<div class="t" style="left:12px;top:9px">Copy as CSS</div>
<div class="t" style="left:12px;top:27px">Copy as SVG</div>
<div class="t" style="left:12px;top:45px">Copy as PNG</div><div class="s" style="right:12px;top:45px">⇧⌘<b>C</b></div>
<div class="t" style="left:12px;top:76px;color:#d5e6fb">Copy properties</div><div class="s" style="right:12px;top:76px;color:#e4eefc">⌥⌘<b>C</b></div>
<div class="t" style="left:12px;top:94px">Paste properties</div><div class="s" style="right:12px;top:94px">⌥⌘<b>V</b></div>
</div>
</body></html>
